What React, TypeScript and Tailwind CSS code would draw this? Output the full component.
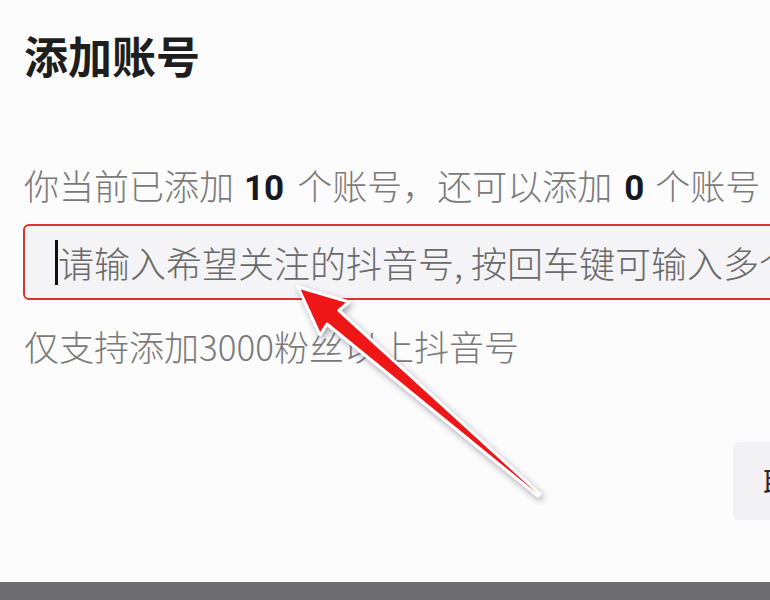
import React from "react";

const CJK = "font-['Noto_Sans_CJK_SC','Noto_Sans',sans-serif]";

// pointer that marks the input field
function Pointer() {
  return (
    <svg className="absolute inset-0 pointer-events-none" width={770} height={600} viewBox="0 0 770 600">
      <defs>
        <filter id="pointer-shadow" x="-20%" y="-20%" width="140%" height="140%">
          <feDropShadow dx="2" dy="3" stdDeviation="3" floodColor="#3a3550" floodOpacity="0.45" />
        </filter>
      </defs>
      <polygon
        points="298,287 349,302 338.7,310.3 540,494 538,496 327,324 320,335"
        fill="#ee1518"
        stroke="#ffffff"
        strokeWidth={3}
        strokeLinejoin="round"
        filter="url(#pointer-shadow)"
      />
    </svg>
  );
}

export default function App() {
  return (
    <div className={`relative w-[770px] h-[600px] overflow-hidden bg-[#fcfcfd] flex flex-col ${CJK}`}>
      <div className="flex-1 pl-[24px] pt-[33px]">
        <h1 className="h-[44px] text-[44px] leading-[44px] font-bold text-[#1e1e1e] whitespace-nowrap">添加账号</h1>

        <p className="mt-[90px] h-[35px] text-[35px] leading-[35px] font-light text-[#7a7a7a] whitespace-nowrap">
          你当前已添加
          <span className="ml-[10px] mr-[13px] font-['Roboto',sans-serif] font-bold text-[#161823]">10</span>
          个账号，还可以添加
          <span className="ml-[12px] mr-[11px] font-['Roboto',sans-serif] font-bold text-[#161823]">0</span>
          个账号
        </p>

        <div className="mt-[22px] -ml-[1px] w-[900px] h-[76px] rounded-[6px] border-2 border-[#d8352e] bg-[#f4f4f6] flex items-center pl-[30px]">
          <span className="shrink-0 w-[3px] h-[45px] bg-[#111]" />
          <span className="text-[36px] leading-[36px] font-light text-[#6a6a6a] whitespace-nowrap">
            请输入希望关注的抖音号, 按回车键可输入多个抖音号
          </span>
        </div>

        <p className="mt-[28px] h-[35px] text-[35px] leading-[35px] font-light text-[#7a7a7a] whitespace-nowrap">
          仅支持添加3000粉丝以上抖音号
        </p>

        <div className="mt-[79px] ml-[709px] w-[160px] h-[78px] rounded-[6px] bg-[#f2f2f4] flex items-center pl-[30px]">
          <span className="text-[30px] leading-[30px] text-[#2a2a2a] whitespace-nowrap">取消</span>
        </div>
      </div>
      <div className="h-[18px] bg-[#6d6d6f]" />
      <Pointer />
    </div>
  );
}
